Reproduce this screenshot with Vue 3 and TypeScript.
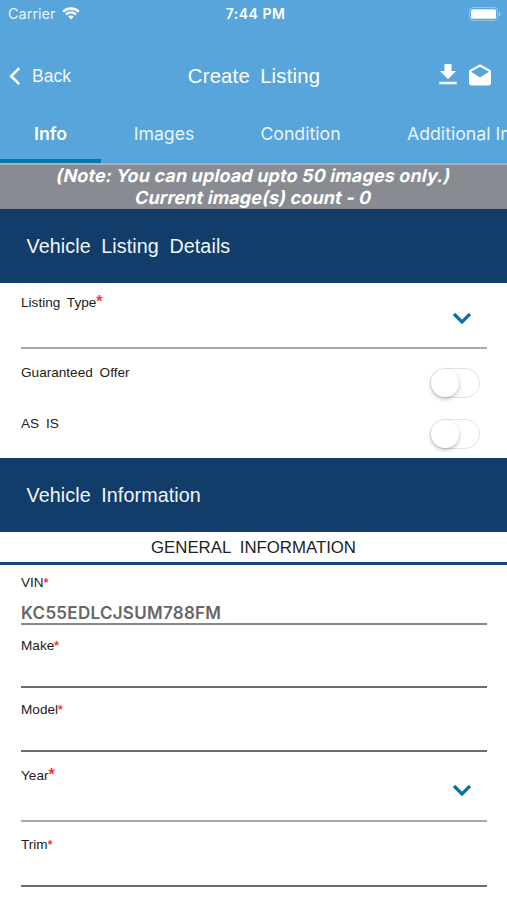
<script setup lang="ts">
import { ref } from 'vue'

interface Tab { id: string; label: string }
interface Field { id: string; label: string; value: string; select?: boolean }

const tabs: Tab[] = [
  { id: 'info', label: 'Info' },
  { id: 'images', label: 'Images' },
  { id: 'condition', label: 'Condition' },
  { id: 'additional', label: 'Additional Info' },
]
const activeTab = ref('info')

const toggles = ref([
  { id: 'guaranteed', label: 'Guaranteed Offer', on: false },
  { id: 'asis', label: 'AS IS', on: false },
])

const fields: Field[] = [
  { id: 'vin', label: 'VIN', value: 'KC55EDLCJSUM788FM' },
  { id: 'make', label: 'Make', value: '' },
  { id: 'model', label: 'Model', value: '' },
  { id: 'year', label: 'Year', value: '', select: true },
  { id: 'trim', label: 'Trim', value: '' },
]
</script>

<template>
  <div class="screen">
    <header class="header">
      <div class="status">
        <div class="carrier">
          <span>Carrier</span>
          <svg class="wifi" width="18" height="13" viewBox="0 0 18 13" fill="none" stroke="#fff" stroke-width="2.4">
            <path d="M1.2 4.600C5.600.4 12.400.4 16.800 4.600" />
            <path d="M4 7.500c2.900-2.700 7.100-2.700 10 0" />
            <path d="M6.200 9.500 9 12.400l2.800-2.900c-1.600-1.500-4-1.500-5.600 0z" fill="#fff" stroke="none" />
          </svg>
        </div>
        <span class="time">7:44 PM</span>
        <svg class="battery" width="32" height="14" viewBox="0 0 32 14">
          <rect x=".5" y=".5" width="28" height="13" rx="3.5" fill="none" stroke="#fff" stroke-opacity=".35" />
          <rect x="2" y="2.200" width="25" height="9.600" rx="1.600" fill="#fff" />
          <path d="M30 4.500c2 .8 2 4.200 0 5z" fill="#fff" fill-opacity=".45" />
        </svg>
      </div>
      <div class="nav">
        <button class="back">
          <svg width="12" height="20" viewBox="0 0 12 20" fill="none" stroke="#fff" stroke-width="2.600">
            <path d="M10.200 1.200 2.200 9.200l8 8" />
          </svg>
          <span>Back</span>
        </button>
        <h1 class="title">Create Listing</h1>
        <div class="actions">
          <svg width="18" height="22" viewBox="0 0 18 22" fill="#fff">
            <path d="M5.500 0h7v7H17l-8 8.300L1 7h4.500zM.3 17.800h17.400v2.400H.3z" />
          </svg>
          <svg width="24" height="24" viewBox="0 0 24 24" fill="#fff">
            <path d="M23 8.600c0-.8-.4-1.500-1-1.900L12 1.200 2 6.700c-.6.4-1 1.100-1 1.900v11.600c0 1.200 1 2.200 2.200 2.200h17.600c1.200 0 2.200-1 2.200-2.200zM12 14.600 3 8.700 12 3.700l9 5z" />
          </svg>
        </div>
      </div>
      <nav class="tabs">
        <button
          v-for="tab in tabs"
          :key="tab.id"
          class="tab"
          :class="[tab.id, { active: tab.id === activeTab }]"
          @click="activeTab = tab.id"
        >{{ tab.label }}</button>
      </nav>
    </header>

    <div class="note">
      <div class="note-limit">(Note: You can upload upto 50 images only.)</div>
      <div class="note-count">Current image(s) count - 0</div>
    </div>

    <h2 class="section">Vehicle Listing Details</h2>
    <div class="listing">
      <div class="field listing-type">
        <label>Listing Type<i class="big">*</i></label>
        <svg class="chevron" width="20" height="13" viewBox="0 0 20 13"><path d="M2 2l8 8 8-8" /></svg>
      </div>
      <div v-for="t in toggles" :key="t.id" class="toggle-row">
        <span class="toggle-label">{{ t.label }}</span>
        <button class="switch" :class="{ on: t.on }" @click="t.on = !t.on"><span class="knob"></span></button>
      </div>
    </div>

    <h2 class="section">Vehicle Information</h2>
    <h3 class="subhead">GENERAL INFORMATION</h3>
    <div v-for="f in fields" :key="f.id" class="field" :class="f.id">
      <label>{{ f.label }}<i :class="{ big: f.select }">*</i></label>
      <div v-if="f.value" class="value">{{ f.value }}</div>
      <svg v-if="f.select" class="chevron" width="20" height="13" viewBox="0 0 20 13"><path d="M2 2l8 8 8-8" /></svg>
    </div>
  </div>
</template>

<style>
body {
  background: #fff;
}
</style>

<style scoped>
* {
  box-sizing: border-box;
}
.screen {
  width: 507px;
  height: 900px;
  overflow: hidden;
  background: #fff;
  font-family: "Liberation Sans", Arial, sans-serif;
}
button {
  padding: 0;
  border: 0;
  background: none;
  color: inherit;
  font: inherit;
}
h1, h2, h3 {
  margin: 0;
  font-weight: 400;
}
.header {
  height: 163px;
  background: #58a5dc;
  color: #fff;
}
.status {
  height: 28px;
  display: grid;
  grid-template-columns: 1fr auto 1fr;
  align-items: center;
  padding: 0 6px 1px 8px;
  font: 400 14.500px/27px Inter, sans-serif;
}
.carrier {
  display: flex;
  align-items: center;
  gap: 6px;
  color: #e4f2fc;
}
.time {
  font-weight: 600;
  font-size: 14px;
  letter-spacing: 0.500px;
  padding-left: 2px;
}
.battery {
  justify-self: end;
}
.nav {
  height: 97px;
  display: grid;
  grid-template-columns: 1fr auto 1fr;
  align-items: center;
  padding: 0 15px 0 9px;
}
.back {
  display: flex;
  align-items: center;
  gap: 11px;
  font-size: 17.500px;
  color: #f1f8fd;
}
.title {
  padding-left: 7px;
  font-size: 20.300px;
  letter-spacing: 0.200px;
  word-spacing: 4.400px;
}
.actions {
  display: flex;
  justify-content: flex-end;
  align-items: center;
  gap: 11px;
  padding-bottom: 3px;
}
.tabs {
  height: 38px;
  display: flex;
}
.tab {
  flex: none;
  height: 38px;
  padding-bottom: 20px;
  font: 400 17.700px/18px Inter, sans-serif;
  color: #e6f3fc;
  white-space: nowrap;
}
.info { width: 101px; }
.images { width: 126px; }
.condition { width: 147px; }
.additional { padding-left: 33px; }
.tab.active {
  color: #fff;
  font-weight: 600;
  border-bottom: 4px solid #0878a8;
  padding-bottom: 16px;
}
.note {
  height: 46px;
  border-top: 2px solid #a5b2bd;
  background: #888c92;
  color: #fff;
  text-align: center;
  font: normal 700 18px/22px Inter, sans-serif;
  letter-spacing: 0.120px;
}
.note-limit,
.note-count {
  transform: skewX(-12deg);
}
.section {
  height: 74px;
  padding-left: 26.500px;
  background: #123c69;
  color: #f1f6fb;
  font-size: 19.700px;
  line-height: 74px;
  letter-spacing: 0.100px;
  word-spacing: 5px;
}
.listing {
  height: 175px;
}
.field {
  display: grid;
  grid-template-columns: 1fr auto;
  align-content: start;
  margin: 0 20px 0 21px;
  border-bottom: 2px solid #777;
}
.field label,
.toggle-label {
  color: #222;
  font-size: 13.600px;
  line-height: 16px;
  word-spacing: 3px;
}
.field i {
  color: #f33;
  font-style: normal;
  font-weight: 700;
  font-size: 12px;
  line-height: 10px;
}
.field i.big {
  font-size: 16px;
  line-height: 10px;
}
.chevron {
  margin-right: 15px;
  fill: none;
  stroke: #0873a3;
  stroke-width: 3.200px;
}
.listing-type {
  height: 66px;
  padding-top: 12px;
  border-color: #aaa;
}
.listing-type .chevron {
  margin-top: 17px;
}
.toggle-row {
  height: 51px;
  display: flex;
  justify-content: space-between;
  padding: 16px 27px 0 21px;
}
.switch {
  width: 50px;
  height: 30px;
  margin-top: 3px;
  border: 1.500px solid #e2e2e2;
  border-radius: 15px;
  flex: none;
}
.knob {
  display: block;
  width: 28px;
  height: 28px;
  border-radius: 50%;
  background: #fff;
  box-shadow: 0 2px 4px rgba(0, 0, 0, 0.25);
}
.on .knob {
  margin-left: 19px;
}
.subhead {
  height: 33px;
  border-bottom: 3px solid #164477;
  color: #222;
  text-align: center;
  font-size: 16.800px;
  line-height: 31px;
  word-spacing: 4.500px;
}
.vin { height: 60px; padding-top: 10px; border-color: #888; }
.make { height: 63px; padding-top: 13px; }
.model { height: 64px; padding-top: 14px; }
.year { height: 70px; padding-top: 16px; border-color: #aaa; }
.trim { height: 65px; padding-top: 15px; }
.year .chevron {
  margin-top: 16px;
}
.trim,
.make,
.model {
  border-bottom-color: #6c6c6c;
}
.value {
  grid-column: 1;
  margin-top: 12px;
  color: #666;
  font: 600 17px/20px Inter, sans-serif;
  letter-spacing: 0.280px;
}
</style>
